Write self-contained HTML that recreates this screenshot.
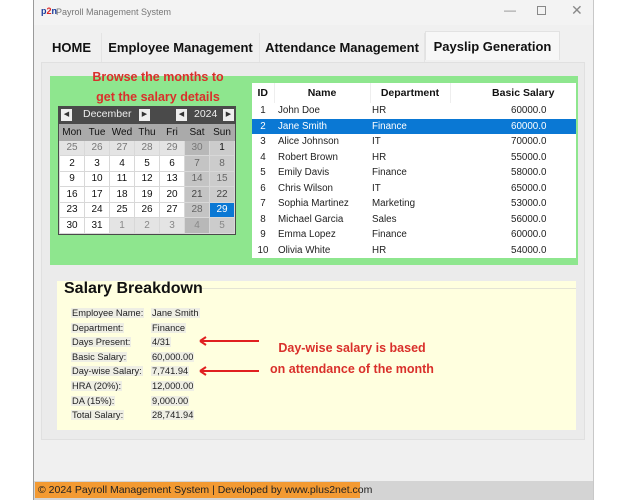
<!DOCTYPE html>
<html><head><meta charset="utf-8"><style>
*{margin:0;padding:0;box-sizing:border-box}
body{width:620px;height:500px;background:#fff;font-family:"Liberation Sans",sans-serif;position:relative;overflow:hidden}
.a{position:absolute}
.win{left:33px;top:0;width:561px;height:500px;background:#f0f0f0;border-left:1px solid #9a9a9a;border-right:1px solid #c8c8c8}
.title{left:34px;top:0;width:559px;height:25px;background:#f3f3f3;font-size:9px;color:#777}
.tab{top:33px;height:29px;background:#f0f0f0;font-weight:bold;font-size:13px;color:#111;text-align:center;line-height:29px;border-right:1px solid #e4e4e4}
.cal td{width:25px;height:15.5px;text-align:center;font-size:10px;color:#111;border:1px solid #d8d8d8;background:#fff;padding:0}
.cal{border-collapse:collapse}
table.t{border-collapse:collapse;font-size:9.8px;color:#222}
table.t td{height:15.5px;padding:0}
.sal div{height:14.6px;font-size:9.3px;color:#222}
.sal span{background:#eeeee4;padding:0 1px}
.red{color:#d9302b;font-weight:bold;font-size:12.5px;text-align:center}
</style></head><body>
<div class="a win"></div>
<div class="a title"><span class="a" style="left:7px;top:6px;font-weight:bold;font-size:9px;color:#1a3a9a">p<span style="color:#d22">2</span>n</span><span class="a" style="left:22px;top:7px">Payroll Management System</span>
<span class="a" style="left:470px;top:3px;font-size:12px;color:#888">—</span>
<span class="a" style="left:503px;top:6px;width:9px;height:9px;border:1px solid #888"></span>
<span class="a" style="left:537px;top:2px;font-size:14px;color:#888">✕</span></div>
<div class="a tab" style="left:42px;width:60px">HOME</div>
<div class="a tab" style="left:102px;width:158px">Employee Management</div>
<div class="a tab" style="left:260px;width:165px">Attendance Management</div>
<div class="a tab" style="left:425px;top:31px;width:135px;background:#f7f7f7;border:1px solid #e2e2e2;border-bottom:none">Payslip Generation</div>
<div class="a" style="left:41px;top:62px;width:544px;height:378px;background:#ebebeb;border:1px solid #e0e0e0"></div>
<div class="a" style="left:50px;top:76px;width:528px;height:189px;background:#8ee68e"></div>
<div class="a red" style="left:58px;top:67px;width:200px;line-height:20px">Browse the months to<br>get the salary details</div>
<div class="a" style="left:58px;top:106px;width:178px;height:129px;background:#4a4a4a;padding:1px">
<div style="height:16px;position:relative;color:#eee;font-size:10.5px">
<span class="a" style="left:2px;top:2px;width:11px;height:12px;background:#eee;color:#333;font-size:7px;text-align:center;line-height:12px">◀</span>
<span class="a" style="left:24px;top:1px">December</span>
<span class="a" style="left:80px;top:2px;width:11px;height:12px;background:#eee;color:#333;font-size:7px;text-align:center;line-height:12px">▶</span>
<span class="a" style="left:117px;top:2px;width:11px;height:12px;background:#eee;color:#333;font-size:7px;text-align:center;line-height:12px">◀</span>
<span class="a" style="left:135px;top:1px">2024</span>
<span class="a" style="left:164px;top:2px;width:11px;height:12px;background:#eee;color:#333;font-size:7px;text-align:center;line-height:12px">▶</span>
</div>
<table class="cal" style="margin-top:1px">
<tr style="background:#a8a8a8"><td style="background:#aaa;border-color:#aaa">Mon</td><td style="background:#aaa;border-color:#aaa">Tue</td><td style="background:#aaa;border-color:#aaa">Wed</td><td style="background:#aaa;border-color:#aaa">Thu</td><td style="background:#aaa;border-color:#aaa">Fri</td><td style="background:#aaa;border-color:#aaa">Sat</td><td style="background:#aaa;border-color:#aaa">Sun</td></tr>
<tr><td style="background:#e4e4e4;color:#777">25</td><td style="background:#e4e4e4;color:#777">26</td><td style="background:#e4e4e4;color:#777">27</td><td style="background:#e4e4e4;color:#777">28</td><td style="background:#e4e4e4;color:#777">29</td><td style="background:#b8b8b8;color:#777">30</td><td style="background:#ccc">1</td></tr>
<tr><td>2</td><td>3</td><td>4</td><td>5</td><td>6</td><td style="background:#c4c4c4;color:#666">7</td><td style="background:#ccc;color:#666">8</td></tr>
<tr><td>9</td><td>10</td><td>11</td><td>12</td><td>13</td><td style="background:#c4c4c4;color:#666">14</td><td style="background:#ccc;color:#666">15</td></tr>
<tr><td>16</td><td>17</td><td>18</td><td>19</td><td>20</td><td style="background:#c4c4c4;color:#444">21</td><td style="background:#ccc;color:#444">22</td></tr>
<tr><td>23</td><td>24</td><td>25</td><td>26</td><td>27</td><td style="background:#c4c4c4;color:#666">28</td><td style="background:#0a78d4;color:#fff">29</td></tr>
<tr><td>30</td><td>31</td><td style="background:#e4e4e4;color:#888">1</td><td style="background:#e4e4e4;color:#888">2</td><td style="background:#e4e4e4;color:#888">3</td><td style="background:#b8b8b8;color:#888">4</td><td style="background:#ccc;color:#888">5</td></tr>
</table></div>
<div class="a" style="left:252px;top:83px;width:324px;height:175px;background:#fff">
<table class="t" style="width:324px">
<tr style="font-weight:bold;font-size:10.5px;color:#111"><td style="width:22px;height:20px;text-align:center;border-right:1px solid #eee">ID</td><td style="width:96px;text-align:center;border-right:1px solid #eee">Name</td><td style="width:80px;text-align:center;border-right:1px solid #eee">Department</td><td style="text-align:center;padding-left:20px">Basic Salary</td></tr>
<tr><td align="center">1</td><td style="padding-left:4px">John Doe</td><td style="padding-left:2px">HR</td><td style="padding-left:61px">60000.0</td></tr>
<tr style="background:#0a78d4;color:#fff"><td align="center">2</td><td style="padding-left:4px">Jane Smith</td><td style="padding-left:2px">Finance</td><td style="padding-left:61px">60000.0</td></tr>
<tr><td align="center">3</td><td style="padding-left:4px">Alice Johnson</td><td style="padding-left:2px">IT</td><td style="padding-left:61px">70000.0</td></tr>
<tr><td align="center">4</td><td style="padding-left:4px">Robert Brown</td><td style="padding-left:2px">HR</td><td style="padding-left:61px">55000.0</td></tr>
<tr><td align="center">5</td><td style="padding-left:4px">Emily Davis</td><td style="padding-left:2px">Finance</td><td style="padding-left:61px">58000.0</td></tr>
<tr><td align="center">6</td><td style="padding-left:4px">Chris Wilson</td><td style="padding-left:2px">IT</td><td style="padding-left:61px">65000.0</td></tr>
<tr><td align="center">7</td><td style="padding-left:4px">Sophia Martinez</td><td style="padding-left:2px">Marketing</td><td style="padding-left:61px">53000.0</td></tr>
<tr><td align="center">8</td><td style="padding-left:4px">Michael Garcia</td><td style="padding-left:2px">Sales</td><td style="padding-left:61px">56000.0</td></tr>
<tr><td align="center">9</td><td style="padding-left:4px">Emma Lopez</td><td style="padding-left:2px">Finance</td><td style="padding-left:61px">60000.0</td></tr>
<tr><td align="center">10</td><td style="padding-left:4px">Olivia White</td><td style="padding-left:2px">HR</td><td style="padding-left:61px">54000.0</td></tr>
</table></div>
<div class="a" style="left:57px;top:281px;width:519px;height:149px;background:#ffffdf"></div>
<div class="a" style="left:196px;top:288px;width:380px;height:1px;background:#e4e4d4"></div>
<div class="a" style="left:64px;top:280px;font-size:16px;font-weight:bold;color:#111">Salary Breakdown</div>
<div class="a sal" style="left:71px;top:308px"><div><span>Employee Name:</span></div><div><span>Department:</span></div><div><span>Days Present:</span></div><div><span>Basic Salary:</span></div><div><span>Day-wise Salary:</span></div><div><span>HRA (20%):</span></div><div><span>DA (15%):</span></div><div><span>Total Salary:</span></div></div>
<div class="a sal" style="left:151px;top:308px"><div><span>Jane Smith</span></div><div><span>Finance</span></div><div><span>4/31</span></div><div><span>60,000.00</span></div><div><span>7,741.94</span></div><div><span>12,000.00</span></div><div><span>9,000.00</span></div><div><span>28,741.94</span></div></div>
<svg class="a" style="left:196px;top:334px" width="66" height="45"><g stroke="#e02020" stroke-width="2" fill="none"><path d="M4 7H63M4 7l6-4M4 7l6 4M4 37H63M4 37l6-4M4 37l6 4"/></g></svg>
<div class="a red" style="left:262px;top:338px;width:180px;line-height:21px">Day-wise salary is based<br>on attendance of the month</div>
<div class="a" style="left:34px;top:481px;width:559px;height:19px;background:#d4d4d4"></div>
<div class="a" style="left:35px;top:482px;width:325px;height:16px;background:#f39a32;font-size:10.5px;color:#222;line-height:16px;padding-left:3px;white-space:nowrap">© 2024 Payroll Management System | Developed by www.plus2net.com</div>
</body></html>
